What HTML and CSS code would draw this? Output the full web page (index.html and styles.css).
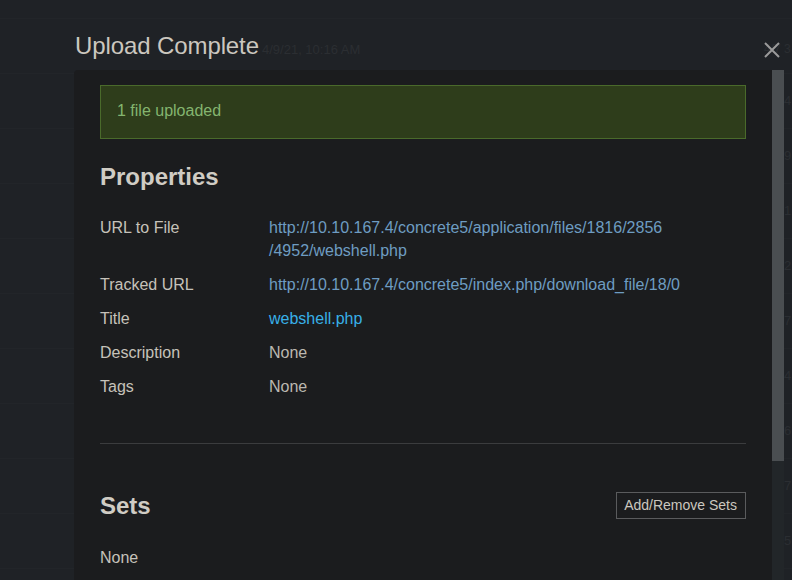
FILE: index.html
```html
<!DOCTYPE html>
<html lang="en">
<head>
<meta charset="utf-8">
<title>Upload Complete</title>
<link rel="stylesheet" href="styles.css">
</head>
<body>
<div class="page">
  <div class="page-head"></div>
  <div class="page-row first"><span class="c-date">4/9/21, 10:16 AM</span><span class="c-end">4/7 3</span></div>
  <div class="page-row"><span class="c-num">4</span></div>
  <div class="page-row"><span class="c-num">9</span></div>
  <div class="page-row"><span class="c-num">1</span></div>
  <div class="page-row"><span class="c-num">2</span></div>
  <div class="page-row"><span class="c-num">7</span></div>
  <div class="page-row"><span class="c-num">4</span></div>
  <div class="page-row"><span class="c-num">6</span></div>
  <div class="page-row"><span class="c-num">7</span></div>
  <div class="page-row"><span class="c-num">5</span></div>
</div>

<div class="dialog">
  <div class="dialog-title">
    <h1>Upload Complete</h1>
    <button class="close" type="button" aria-label="Close">
      <svg width="16" height="16" viewBox="0 0 16 16"><path d="M1 1 L15 15 M15 1 L1 15" stroke="#9a9a9a" stroke-width="2" fill="none"/></svg>
    </button>
  </div>
  <div class="dialog-body">
    <div class="dialog-content">
      <div class="alert">1 file uploaded</div>

      <h2 class="section-title">Properties</h2>
      <dl class="props">
        <dt>URL to File</dt>
        <dd><a class="link-muted" href="#"><span class="nw">http://10.10.167.4/concrete5/application/files/1816/2856</span><wbr><span class="nw">/4952/webshell.php</span></a></dd>
        <dt>Tracked URL</dt>
        <dd><a class="link-muted" href="#">http://10.10.167.4/concrete5/index.php/download_file/18/0</a></dd>
        <dt>Title</dt>
        <dd><a class="link-bright" href="#">webshell.php</a></dd>
        <dt>Description</dt>
        <dd>None</dd>
        <dt>Tags</dt>
        <dd>None</dd>
      </dl>

      <hr class="divider">

      <div class="section-head">
        <h2 class="section-title flat">Sets</h2>
        <button class="btn" type="button">Add/Remove Sets</button>
      </div>
      <p class="plain">None</p>
    </div>
    <div class="scrollbar"><div class="thumb"></div></div>
  </div>
</div>
</body>
</html>
```

FILE: styles.css
```css
* { box-sizing: border-box; }
html, body {
  margin: 0;
  height: 100%;
}
body {
  background: #1f2226;
  font-family: "Liberation Sans", Arial, sans-serif;
  color: #c6c2ba;
  overflow: hidden;
  position: relative;
  width: 792px;
  height: 580px;
}

/* faint page behind the modal */
.page {
  width: 792px;
  overflow: hidden;
}
.page-head {
  height: 19px;
  border-bottom: 1px solid #222529;
}
.page-row {
  height: 55px;
  border-bottom: 1px solid #222529;
  display: grid;
  grid-template-columns: 262px 502px 20px 8px;
  align-items: start;
  white-space: nowrap;
  font-size: 13px;
  line-height: 15px;
  color: #2b2e32;
  padding-top: 19px;
}
.page-row.first { padding-top: 23px; }
.c-date { grid-column: 2; }
.c-end { grid-column: 3 / 5; font-size: 12px; }
.c-num { grid-column: 4; }

/* dialog */
.dialog {
  position: absolute;
  top: 0;
  left: 74px;
  width: 710px;
  height: 580px;
  display: flex;
  flex-direction: column;
}
.dialog-title {
  height: 70px;
  padding-top: 34px;
  display: flex;
  align-items: flex-start;
  justify-content: space-between;
  position: relative;
}
.dialog-title h1 {
  margin: 0;
  padding-left: 1px;
  font-size: 24px;
  line-height: 24px;
  font-weight: normal;
  color: #cbc7bf;
  letter-spacing: -0.1px;
}
.close {
  position: absolute;
  right: 4px;
  top: 42px;
  width: 16px;
  height: 16px;
  padding: 0;
  border: 0;
  background: none;
  display: block;
}
.close svg { display: block; }

.dialog-body {
  flex: 1;
  display: flex;
  background: #1b1c1e;
  border-top-left-radius: 4px;
  overflow: hidden;
}
.dialog-content {
  flex: 1;
  padding: 15px 26px 0 26px;
}
.scrollbar {
  width: 12px;
  background: #222629;
}
.thumb {
  height: 391px;
  background: #4a4e51;
}

.alert {
  border: 1px solid #4a6a2b;
  background: #2e3d1b;
  color: #84b56f;
  font-size: 16px;
  line-height: 22px;
  padding: 14px 16px 16px;
}

.section-title {
  margin: 23px 0 0;
  font-size: 24px;
  line-height: 29px;
  font-weight: bold;
  color: #d0ccc4;
}
.section-title.flat { margin: 0; }

.props {
  margin: 25px 0 0;
  display: grid;
  grid-template-columns: 169px 1fr;
  row-gap: 11px;
  font-size: 16px;
  line-height: 23px;
}
.props dt { color: #c6c2ba; }
.props dd { margin: 0; color: #bcb8b0; }
.link-muted { color: #6e9cc2; text-decoration: none; }
.link-bright { color: #38b0e8; text-decoration: none; }
.nw { white-space: nowrap; }

.divider {
  margin: 45px 0 0;
  border: 0;
  border-top: 1px solid #3b3c3e;
  height: 0;
}

.section-head {
  margin-top: 47px;
  display: flex;
  align-items: center;
  justify-content: space-between;
}
.btn {
  font-family: "Liberation Sans", Arial, sans-serif;
  font-size: 14px;
  line-height: 17px;
  padding: 4px 8px 4px 7px;
  border: 1px solid #5a5b5d;
  background: transparent;
  color: #cbc7bf;
  border-radius: 0;
}
.plain {
  margin: 26px 0 0;
  font-size: 16px;
  line-height: 23px;
  color: #c6c2ba;
}
```
